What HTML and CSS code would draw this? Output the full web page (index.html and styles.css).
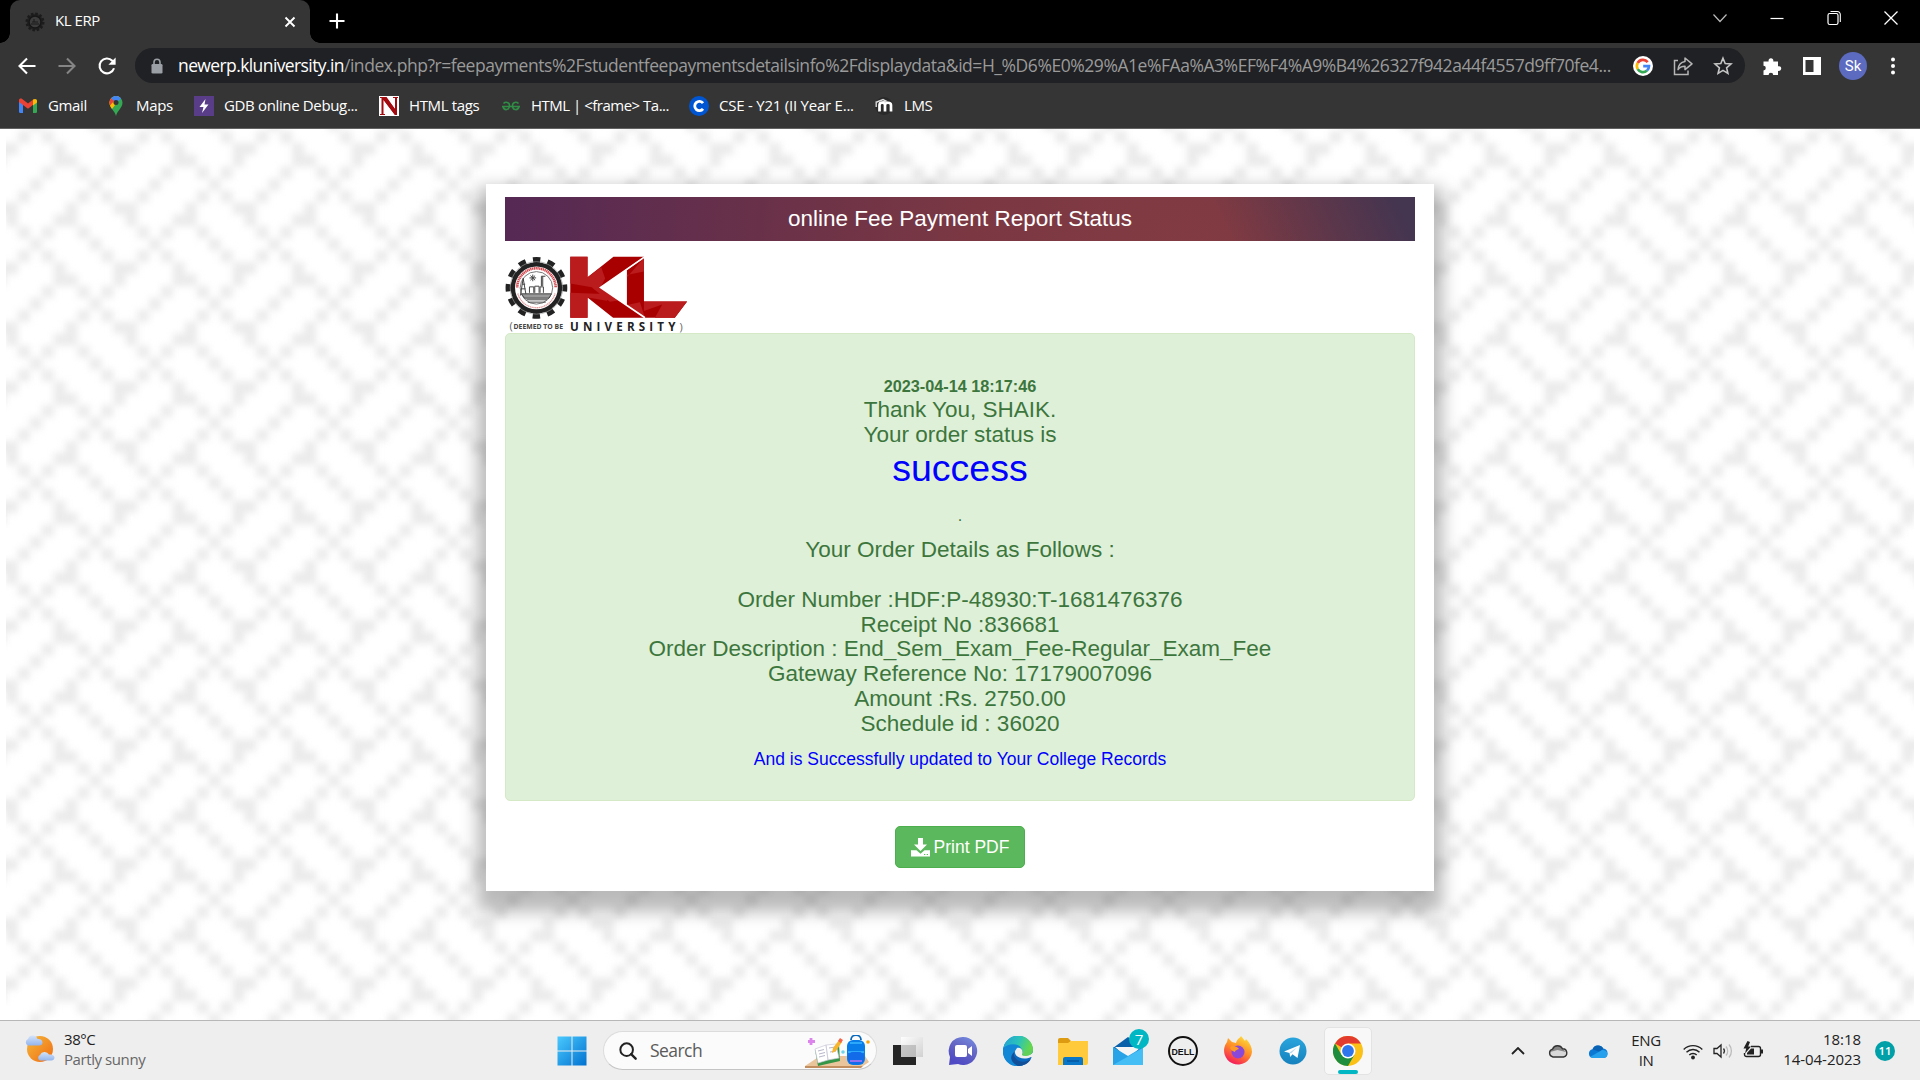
FILE: index.html
```html
<!DOCTYPE html>
<html lang="en">
<head>
<meta charset="utf-8">
<title>KL ERP</title>
<link rel="stylesheet" href="styles.css">
</head>
<body>
<header class="browser">
  <div class="tabstrip">
    <div class="tab">
      <svg class="favicon" viewBox="0 0 20 20"><circle cx="10" cy="10" r="8.2" fill="#242424" stroke="#1b1b1b" stroke-width="2.6" stroke-dasharray="2.4 1.9"/><circle cx="10" cy="10" r="6" fill="#3c3c3c" stroke="#161616" stroke-width="1.5"/><path d="M6 12h8M7 10h6M9 7v3" stroke="#1b1b1b"/></svg>
      <span class="tab-title">KL ERP</span>
      <svg class="tab-close" viewBox="0 0 12 12"><path d="M1.5 1.5l9 9M10.500 1.500l-9 9" stroke="#fff" stroke-width="1.9"/></svg>
    </div>
    <svg class="new-tab" viewBox="0 0 16 16"><path d="M8 .5v15M.5 8h15" stroke="#fff" stroke-width="2.1"/></svg>
    <div class="window-controls">
      <svg viewBox="0 0 16 16"><path d="M1.500 4.500L8 11.500l6.500-7" fill="none" stroke="#bbb" stroke-width="1.200"/></svg>
      <svg viewBox="0 0 16 16"><path d="M1.500 8.500h13" stroke="#fff" stroke-width="1.200"/></svg>
      <svg viewBox="0 0 16 16"><rect x="2" y="3.500" width="10" height="11" rx="1.800" fill="none" stroke="#fff" stroke-width="1.200"/><path d="M4.500 1.500h6.800a3 3 0 0 1 3 3v7.500" fill="none" stroke="#fff" stroke-width="1.100"/></svg>
      <svg viewBox="0 0 16 16"><path d="M1.500 1.500l13 13M14.500 1.500l-13 13" stroke="#fff" stroke-width="1.300"/></svg>
    </div>
  </div>
  <div class="toolbar">
    <div class="nav">
      <svg viewBox="0 0 20 20"><path d="M18.500 10H2.500M10 2.500L2.500 10l7.500 7.500" fill="none" stroke="#fff" stroke-width="2.100"/></svg>
      <svg viewBox="0 0 20 20"><path d="M1.500 10h16M10 2.500l7.500 7.500-7.500 7.500" fill="none" stroke="#858585" stroke-width="2.100"/></svg>
      <svg viewBox="0 0 20 20"><path d="M17 12.200A7.400 7.400 0 1 1 15.300 4.800L17.200 6.700" fill="none" stroke="#fff" stroke-width="2.100"/><path d="M18.600 1.500v7.200h-7.200z" fill="#fff"/></svg>
    </div>
    <div class="address">
      <svg class="lock" viewBox="0 0 12 16"><rect x="0.500" y="6" width="11" height="9.500" rx="1.300" fill="#9aa0a6"/><path d="M3 7V4.200a3 3 0 0 1 6 0V7" fill="none" stroke="#9aa0a6" stroke-width="1.600"/></svg>
      <div class="url"><span class="host">newerp.kluniversity.in</span>/index.php?r=feepayments%2Fstudentfeepaymentsdetailsinfo%2Fdisplaydata&amp;id=H_%D6%E0%29%A1e%FAa%A3%EF%F4%A9%B4%26327f942a44f4557d9ff70fe4...</div>
      <div class="address-icons">
        <svg viewBox="0 0 20 20"><circle cx="10" cy="10" r="10" fill="#fff"/><g fill="none" stroke-width="2.700"><path d="M14.700 6.100A6.100 6.100 0 0 0 4.700 7" stroke="#ea4335"/><path d="M4.700 7a6.100 6.100 0 0 0 0 6.100" stroke="#fbbc05"/><path d="M4.700 13.100a6.100 6.100 0 0 0 9.300 1.500" stroke="#34a853"/><path d="M14 14.600a6 6 0 0 0 2-4.500H10.200" stroke="#4285f4"/></g></svg>
        <svg viewBox="0 0 20 20"><path d="M5 4.500H1.500v14H15V14.500" fill="none" stroke="#b5b5b5" stroke-width="1.500"/><path d="M12 2l7 5.800-7 5.800v-3.400c-3.200 0-5.500 1-7 3.500.4-4.500 2.800-7.500 7-8.100z" fill="none" stroke="#b5b5b5" stroke-width="1.500" stroke-linejoin="round"/></svg>
        <svg viewBox="0 0 20 20"><path d="M10 2.200l2.200 5.300 5.800.5-4.400 3.800 1.300 5.600-4.900-3-4.900 3 1.300-5.600L2 8l5.800-.5z" fill="none" stroke="#c5c5c5" stroke-width="1.600"/></svg>
      </div>
    </div>
    <div class="toolbar-actions">
      <svg viewBox="0 0 20 20"><path d="M1.500 5.500h5.200a2.400 2.400 0 1 1 4.500 0H16v4.800a2.400 2.400 0 1 1 0 4.500V19h-4.800a2.300 2.300 0 1 0-4.600 0H1.500v-4.600a2.300 2.300 0 1 0 0-4.600z" fill="#fff"/></svg>
      <svg viewBox="0 0 20 20"><path d="M1 1h18v18H1z" fill="#fff"/><path d="M3.500 4h8v12h-8z" fill="#353535"/></svg>
      <span class="avatar">Sk</span>
      <svg viewBox="0 0 20 20"><g fill="#fff"><circle cx="10" cy="3.500" r="2"/><circle cx="10" cy="10" r="2"/><circle cx="10" cy="16.500" r="2"/></g></svg>
    </div>
  </div>
  <nav class="bookmarks">
    <span class="bookmark"><svg viewBox="0 0 20 20"><path d="M1 3.500L5 6.500V17H2.200A1.200 1.200 0 0 1 1 15.800z" fill="#4285f4"/><path d="M19 3.500L15 6.500V17h2.800a1.200 1.200 0 0 0 1.200-1.200z" fill="#34a853"/><path d="M1 4.500C1 2.500 3 2.200 4.200 3.100L10 7.500l5.800-4.400V8.300L10 12.700 1 6z" fill="#ea4335"/><path d="M15 3.700c2-1.500 4-.6 4 1.300V6.500l-4 3z" fill="#fbbc04"/></svg><span>Gmail</span></span>
    <span class="bookmark"><svg viewBox="0 0 20 20"><path d="M10 20C9 15 3.500 12 3.500 6.500A6.500 6.500 0 0 1 16.500 6.500C16.500 12 11 15 10 20z" fill="#34a853"/><path d="M3.500 6.500A6.500 6.500 0 0 1 14.500 2L6 13C4.500 11 3.500 9 3.500 6.500z" fill="#fbbc04"/><path d="M5 2.300A6.500 6.500 0 0 1 15 2.300L10 8z" fill="#4285f4"/><path d="M5 2.300L8 5 4 9.500C3 7 3.300 4.500 5 2.300z" fill="#ea4335"/><circle cx="10" cy="6.500" r="2.500" fill="#353535"/></svg><span>Maps</span></span>
    <span class="bookmark"><svg viewBox="0 0 20 20"><path d="M0 0h20v20H0z" fill="#593d88"/><path d="M11.500 3L5.500 11h4L8 17l6.500-8.500h-4z" fill="#fff"/></svg><span>GDB online Debug...</span></span>
    <span class="bookmark"><svg viewBox="0 0 20 20"><path d="M0 0h20v20H0z" fill="#fff"/><path d="M1 1h6l9 12V2h-2V1h5v1h-1v17h-2L4.500 4v14H6v1H1v-1h1.500V2H1z" fill="#a30b10"/><path d="M4 1h3.500L18 16v3h-2L4 3z" fill="#a30b10"/></svg><span>HTML tags</span></span>
    <span class="bookmark"><svg viewBox="0 0 20 20"><path d="M1 10.500h18M2.500 7.500c2-2 6-1.500 6 2 0 5-5.500 5.500-6.500 1M17.500 7.500c-2-2-6-1.500-6 2 0 5 5.500 5.500 6.500 1" fill="none" stroke="#2f8d46" stroke-width="1.600"/></svg><span>HTML | &lt;frame&gt; Ta...</span></span>
    <span class="bookmark"><svg viewBox="0 0 20 20"><circle cx="10" cy="10" r="10" fill="#0056d2"/><path d="M14 7.200A4.600 4.600 0 1 0 14 12.800" fill="none" stroke="#fff" stroke-width="2.800"/></svg><span>CSE - Y21 (II Year E...</span></span>
    <span class="bookmark"><svg viewBox="0 0 20 20"><circle cx="10" cy="10" r="9" fill="#292929"/><path d="M1.500 6.500L9 3.500l3 1.500-7 2M2.200 7v4" fill="none" stroke="#ddd" stroke-width="1.400"/><path d="M5.500 15.500V9c0-3 5.500-3 5.500 0v6.500M11 9c0-3 6-3 6 0v6.500" fill="none" stroke="#fff" stroke-width="2.700"/></svg><span>LMS</span></span>
  </nav>
</header>

<main class="page">
  <svg class="weave" aria-hidden="true">
    <defs>
      <pattern id="weave" width="10" height="10" patternUnits="userSpaceOnUse" patternTransform="translate(0 2) scale(11.925)">
        <path fill="#ebebeb" d="M1 0h1v1h-1zM3 0h1v1h-1zM8 0h1v1h-1zM0 1h1v1h-1zM4 1h1v1h-1zM9 1h1v1h-1zM4 2h2v1h-2zM9 2h1v1h-1zM3 3h1v1h-1zM6 3h1v1h-1zM8 3h1v1h-1zM2 4h1v1h-1zM7 4h1v1h-1zM1 5h1v1h-1zM6 5h1v1h-1zM8 5h1v1h-1zM0 6h1v1h-1zM5 6h1v1h-1zM9 6h1v1h-1zM0 7h1v1h-1zM4 7h2v1h-2zM1 8h1v1h-1zM3 8h1v1h-1zM6 8h1v1h-1zM2 9h1v1h-1zM7 9h1v1h-1z"/>
      </pattern>
      <filter id="soften" x="0" y="0" width="1" height="1" color-interpolation-filters="sRGB"><feGaussianBlur stdDeviation="3.900"/></filter>
    </defs>
    <rect x="-60" y="-60" width="2040" height="1020" fill="url(#weave)" filter="url(#soften)"/>
  </svg>
  <section class="report">
    <h1 class="report-title">online Fee Payment Report Status</h1>
    <svg class="logo" viewBox="135 257 550 232">
      <circle cx="229" cy="353" r="84" fill="none" stroke="#222" stroke-width="18" stroke-dasharray="22 21.980" stroke-dashoffset="11"/>
      <circle cx="229" cy="353" r="71" fill="#fff" stroke="#222" stroke-width="13"/>
      <circle cx="229" cy="353" r="79" fill="none" stroke="#999" stroke-width="2"/>
      <path d="M171 352a58 58 0 0 1 116 0" fill="none" stroke="#d44a50" stroke-width="8" stroke-dasharray="4 1.500"/>
      <path d="M173 370a58 58 0 0 0 112 0" fill="none" stroke="#e29a9d" stroke-width="4" stroke-dasharray="4 1.500"/>
      <circle cx="229" cy="353" r="49" fill="#fff" stroke="#777" stroke-width="3"/>
      <path d="M181 376l8-52 9 52M184 356h12M186 342h9M208 368v-18h13v18M224 368v-20h13v20M240 368v-18h10v18M244 348v-30h12M248 318v30M208 323h20M218 313v20M211 316l14 14M225 316l-14 14" fill="none" stroke="#444" stroke-width="3"/>
      <path d="M184 371h90l-7 13h-74zM199 389h62M203 396h54" fill="#999" stroke="#444" stroke-width="3"/>
      <path d="M331 259h52v62l78-62h92L422 352l134 91h-96l-77-61v61h-52z" fill="#a80000"/>
      <path d="M331 259h52v62l41-31 12 35-14 27-22 0-69-12zM331 368l122 4-12 20-58-10v61h-52zM422 352l58 38-30 5-54-43z" fill="#ba1b1d"/>
      <path d="M501 300l52-38v132h130l-37 49h-90l-55-38z" fill="#a80000"/>
      <path d="M501 322l52-60v42l-52 10zM553 394h130l-37 49h-60l22-40-55 20zM501 405l40-9 15 47z" fill="#ba1b1d"/>
      <path d="M553 261L422 352l134 91" fill="none" stroke="#fff" stroke-width="5"/>
      <path d="M501 300L424 352l77 52z" fill="#fff"/>
      <text x="148" y="481" class="logo-paren">(</text>
      <text x="160" y="476" class="logo-small" textLength="149" lengthAdjust="spacingAndGlyphs">DEEMED TO BE</text>
      <text x="330" y="482" class="logo-large" textLength="318">UNIVERSITY</text>
      <text x="660" y="482" class="logo-paren">)</text>
    </svg>
    <div class="receipt">
      <strong class="stamp">2023-04-14 18:17:46</strong>
      <p class="line">Thank You, SHAIK.</p>
      <p class="line">Your order status is</p>
      <p class="status">success</p>
      <p class="dot">.</p>
      <p class="line intro">Your Order Details as Follows :</p>
      <p class="line">Order Number :HDF:P-48930:T-1681476376</p>
      <p class="line">Receipt No :836681</p>
      <p class="line">Order Description : End_Sem_Exam_Fee-Regular_Exam_Fee</p>
      <p class="line">Gateway Reference No: 17179007096</p>
      <p class="line">Amount :Rs. 2750.00</p>
      <p class="line">Schedule id : 36020</p>
      <p class="note">And is Successfully updated to Your College Records</p>
    </div>
    <button class="print"><svg viewBox="0 0 19 19"><path d="M7 0h5v6.500h4L9.500 13 3 6.500h4z" fill="#fff"/><path d="M0 12.200h5.500l4 3.500 4-3.500H19v6.300H0z" fill="#fff"/><path d="M13 16.500h1.300M15.700 16.500H17" stroke="#5cb85c"/></svg>Print PDF</button>
  </section>
</main>

<footer class="taskbar">
  <div class="weather">
    <svg viewBox="0 0 30 30"><defs><linearGradient id="sun" x2="1" y2="1"><stop stop-color="#f4b93a"/><stop offset="1" stop-color="#f06b14"/></linearGradient><linearGradient id="mist" x2="0" y2="1"><stop stop-color="#d3e4fb"/><stop offset="1" stop-color="#93b4ee"/></linearGradient></defs><circle cx="15" cy="15" r="13" fill="url(#sun)"/><path d="M3 11.500a3.500 3.500 0 0 1 0-6.500 5 5 0 0 1 9.500 0c3-.5 5 1.500 5 3.500s-1.500 3-3 3z" fill="url(#mist)"/><path d="M15 26.500a3 3 0 0 1 0-5.500 5 5 0 0 1 9-.5c3.500-.5 5.500 1 5.500 3s-1.500 3-3 3z" fill="url(#mist)"/></svg>
    <div class="weather-text"><span>38°C</span><span class="muted">Partly sunny</span></div>
  </div>
  <div class="apps">
    <svg class="app start" viewBox="0 0 30 30"><defs><linearGradient id="win" gradientUnits="userSpaceOnUse" x2="30" y2="30"><stop stop-color="#4ccbff"/><stop offset="1" stop-color="#0070cf"/></linearGradient></defs><path d="M.5.500h14v14H.5zM15.500.500h14v14h-14zM.5 15.500h14v14H.5zM15.500 15.500h14v14h-14z" fill="url(#win)"/></svg>
    <div class="search">
      <svg class="glass" viewBox="0 0 20 20"><circle cx="8.500" cy="8.500" r="7" fill="none" stroke="#222" stroke-width="2.200"/><path d="M13.500 13.500l5 5" stroke="#222" stroke-width="2.600" stroke-linecap="round"/></svg>
      <span>Search</span>
      <svg class="school" viewBox="0 0 66 34"><path d="M0 31L15 21h45l4 6-6 4z" fill="#eac49b"/><path d="M0 31h58l-2 2H0z" fill="#c28e60"/><path d="M10 15l24-6 1 17-22 5z" fill="#349547"/><path d="M10 14l11-4 2 15-10 3zM21 10l10-1 3 14-11 2z" fill="#fff" stroke="#c8c8d8" stroke-width=".7"/><path d="M13 16l6-1.500M14 19l6-1.500M14 22l6-1.500M24 13l6-1M25 17l6-1" stroke="#a3a3bb" stroke-width=".8"/><path d="M27 18l1-5 6-8 3 2-6 9z" fill="#f7b52d"/><path d="M33 6l2-3 3 2-2 3z" fill="#f4664a"/><path d="M46 5a5 5 0 0 1 10 0" fill="none" stroke="#0868bb" stroke-width="1.800"/><rect x="42" y="5" width="18" height="25" rx="6" fill="#087ce9"/><path d="M43 17h16M45 8h12" stroke="#39b6ff" stroke-width="1.500"/><rect x="43" y="17" width="16" height="12" rx="5" fill="#126be9"/><path d="M45 26h12" stroke="#b975f3" stroke-width="1.500"/><path d="M6 3v7M3 6.500h7" stroke="#dc83ec" stroke-width="2.800"/><circle cx="38" cy="17" r="1.800" fill="#6bd6e9"/><circle cx="63" cy="7" r="1.800" fill="#f5a512"/></svg>
    </div>
    <svg class="app" viewBox="0 0 30 30"><defs><linearGradient id="pane" x2="1" y2="1"><stop stop-color="#fff"/><stop offset="1" stop-color="#cfcfcf"/></linearGradient></defs><path d="M0 9h23v20H0z" fill="#252525"/><path d="M8 1h22v20H8z" fill="url(#pane)" opacity=".93"/><path d="M8 9h15v12H8z" fill="#aaa" opacity=".5"/></svg>
    <svg class="app" viewBox="0 0 30 30"><defs><linearGradient id="chat" x1="1" y1="0" x2=".5" y2="1"><stop stop-color="#7791e6"/><stop offset=".5" stop-color="#6567c4"/><stop offset="1" stop-color="#504bc4"/></linearGradient></defs><path d="M15 1a14 14 0 1 1-5 27L1 29l1-8A14 14 0 0 1 15 1z" fill="url(#chat)"/><rect x="7" y="9" width="12" height="12" rx="2" fill="#fff"/><path d="M20 13l4-3v10l-4-3z" fill="#fff"/></svg>
    <svg class="app" viewBox="0 0 30 30"><defs><linearGradient id="edge" x2="1" y2=".3"><stop stop-color="#219fd9"/><stop offset=".55" stop-color="#2bc3ba"/><stop offset="1" stop-color="#66d84a"/></linearGradient></defs><circle cx="15" cy="15" r="15" fill="#0b68bf"/><path d="M.3 12A15 15 0 0 1 30 13c0 7-7 8-11 6 2-3 0-7-5-8C8 9 3 11 .3 12z" fill="url(#edge)"/><path d="M.3 12c5-5 17-6 19 3-3-4-9-2-8 4 0 5 5 9 9 10.500C8 33-2 24 .3 12z" fill="#1187d6"/><path d="M11 16c-1 8 8 13 17 7-3 5-8 7-13 7-7-3-9-9-4-14z" fill="#114f99"/><path d="M12 15c-1 6 8 10 16 6l2 1 0-6c-2 4-8 4-11 3 2-4-1-8-5-7z" fill="#eee"/><path d="M30 13c0 7-7 8-11 6l2-4z" fill="#60d05a"/></svg>
    <svg class="app" viewBox="0 0 30 30"><path d="M0 4a2 2 0 0 1 2-2h8l3 3-3 4H0z" fill="#dc9b10"/><path d="M0 7h10l3-2h17v22a2 2 0 0 1-2 2H0z" fill="#ffcb3c"/><path d="M5 23a2 2 0 0 1 2-2h16a2 2 0 0 1 2 2v6H5z" fill="#0a76c7"/><path d="M9 25h12" stroke="#04539a" stroke-width="1.300"/></svg>
    <div class="app mail"><svg viewBox="0 0 30 30"><path d="M0 12L15 1l15 11v17H0z" fill="#0b60aa"/><path d="M2 11h26l-13 12z" fill="#f5f5f5"/><path d="M0 11l15 9 15-9v18H0z" fill="#29a3e7"/><path d="M0 29L30 12v17z" fill="#45bdf5"/></svg><span class="badge">7</span></div>
    <svg class="app" viewBox="0 0 30 30"><circle cx="15" cy="15" r="14" fill="none" stroke="#111" stroke-width="2"/><text x="3.500" y="18.500" class="dell" textLength="23" lengthAdjust="spacingAndGlyphs">DELL</text></svg>
    <svg class="app" viewBox="0 0 30 30"><defs><linearGradient id="fox" x1=".8" y1="0" x2=".3" y2="1"><stop stop-color="#ffe33b"/><stop offset=".5" stop-color="#ff8a26"/><stop offset="1" stop-color="#f5155f"/></linearGradient></defs><path d="M4 6l1-4 4 4 4 1c1-4 4-5 5-7 2 2 3 4 4 5l1-2c4 4 6 8 6 13A14 14 0 1 1 4 6z" fill="url(#fox)"/><circle cx="15" cy="16" r="6.500" fill="#8a48d8"/><path d="M8 10c4 0 7 1 8 3-2 1-4 1-4 3-3-1-6-3-4-6z" fill="#ff9b25"/></svg>
    <svg class="app" viewBox="0 0 30 30"><defs><linearGradient id="tg" x2="0" y2="1"><stop stop-color="#2aa5dd"/><stop offset="1" stop-color="#1681bd"/></linearGradient></defs><circle cx="15" cy="15" r="13.500" fill="url(#tg)"/><path d="M6 15.500L22 9l-2.500 13-5-3.700-2.300 2.700-.7-4z" fill="#fff"/><path d="M11.500 16.500L19 11.500l-6 6z" fill="#b8d9ed"/></svg>
    <div class="active"><svg class="app" viewBox="0 0 30 30"><circle cx="15" cy="15" r="15" fill="#fbc116"/><path d="M15 15L2 7.500A15 15 0 0 1 28 7.500H15z" fill="#e33b2e"/><path d="M2 7.500A15 15 0 0 0 15 30l6.500-11.300L8.500 18.700z" fill="#1e8e3e"/><circle cx="15" cy="15" r="7.500" fill="#fff"/><circle cx="15" cy="15" r="5.900" fill="#2f75eb"/></svg></div>
  </div>
  <div class="tray">
    <svg class="caret" viewBox="0 0 14 8"><path d="M1 7l6-6 6 6" fill="none" stroke="#222" stroke-width="1.800"/></svg>
    <svg class="cloud" viewBox="0 0 20 14"><path d="M5 13a4 4 0 0 1-.5-7.800 5.500 5.500 0 0 1 10-.5A4.200 4.200 0 0 1 15.500 13z" fill="#d8d8d8"/><path d="M4.500 5.200a5.500 5.500 0 0 1 10-.5L18 8 9.500 6 2 8z" fill="#858585"/><path d="M5 13a4 4 0 0 1-.5-7.800 5.500 5.500 0 0 1 10-.5A4.200 4.200 0 0 1 15.500 13z" fill="none" stroke="#333" stroke-width="1.400"/></svg>
    <svg class="cloud" viewBox="0 0 20 14"><path d="M4.500 14a4.500 4.500 0 0 1 0-8.800 6 6 0 0 1 10.800-.7A4.800 4.800 0 0 1 15.500 14z" fill="#0a78d4"/><path d="M4.500 5.200a6 6 0 0 1 10.800-.7L12 8z" fill="#0962b3"/><path d="M2 13l12-7c3 0 5.500 1.500 5.500 4S18 14 15.500 14H4.500z" fill="#24a0ec"/></svg>
    <div class="lang"><span>ENG</span><span>IN</span></div>
    <svg class="glyph" viewBox="0 0 20 20"><g fill="none" stroke="#222" stroke-width="1.400"><path d="M.7 8.500a13 13 0 0 1 18.600 0M3.500 11.300a9 9 0 0 1 13 0M6.300 14a5.300 5.300 0 0 1 7.400 0"/></g><circle cx="10" cy="16.500" r="1.900" fill="#222"/></svg>
    <svg class="glyph" viewBox="0 0 20 20"><path d="M1 7.500h3l4-3.500v12l-4-3.500H1z" fill="none" stroke="#222" stroke-width="1.300"/><path d="M10.500 7.500a4 4 0 0 1 0 5" fill="none" stroke="#333" stroke-width="1.300"/><path d="M13 5.500a7 7 0 0 1 0 9M16 3.500a10 10 0 0 1 0 13" fill="none" stroke="#bbb" stroke-width="1.300"/></svg>
    <svg class="glyph" viewBox="0 0 20 20"><path d="M8 5.500h7.500a2 2 0 0 1 2 2v6a2 2 0 0 1-2 2H3.500a2 2 0 0 1-2-2V12" fill="none" stroke="#222" stroke-width="1.400"/><path d="M18 8.500h2v4h-2z" fill="#222"/><path d="M4 13.500V12l4-4.500h3v6z" fill="#222"/><path d="M4.500 0L.5 7.500h2.700L2 12.500l6-7H5.200L7 1z" fill="#222"/></svg>
    <div class="clock"><span>18:18</span><span>14-04-2023</span></div>
    <span class="count">11</span>
  </div>
</footer>
</body>
</html>
```
FILE: styles.css
```css
* { box-sizing: border-box; }
body {
  margin: 0;
  width: 1920px;
  height: 1080px;
  overflow: hidden;
  display: flex;
  flex-direction: column;
  font-family: "Open Sans", "Noto Sans", sans-serif;
  background: #fff;
}
svg { display: block; flex: none; }
p, h1 { margin: 0; font-weight: 400; }

/* Browser frame */
.browser { height: 129px; background: #353535; border-bottom: 1px solid #626262; flex: none; color: #fff; }
.tabstrip { height: 43px; background: #000; display: flex; align-items: flex-start; }
.tab {
  width: 300px; height: 43px; margin-left: 10px; padding: 0 14px 0 15px;
  display: flex; align-items: center; position: relative;
  background: #353535; border-radius: 10px 10px 0 0; font-size: 15px;
}
.tab::before, .tab::after {
  content: ""; position: absolute; bottom: 0; width: 10px; height: 10px;
}
.tab::before { left: -10px; background: radial-gradient(circle at 0 0, #000 9.500px, #353535 10px); }
.tab::after { right: -10px; background: radial-gradient(circle at 100% 0, #000 9.500px, #353535 10px); }
.favicon { width: 20px; height: 20px; }
.tab-title { margin-left: 10px; margin-right: auto; letter-spacing: -0.450px; padding-bottom: 3px; }
.tab-close { width: 12px; height: 12px; }
.new-tab { width: 16px; height: 16px; margin: 13px 0 0 19px; }
.window-controls { margin-left: auto; margin-right: 21px; padding-top: 10px; display: flex; gap: 41px; }
.window-controls svg { width: 16px; height: 16px; }

.toolbar { display: flex; align-items: center; height: 45px; }
.nav { display: flex; gap: 20px; margin-left: 17px; }
.nav svg, .address-icons svg { width: 20px; height: 20px; }
.address {
  width: 1610px; height: 35px; margin-left: 18px; padding-left: 16px; border-radius: 18px;
  background: #202124; display: flex; align-items: center;
}
.lock { width: 12px; height: 16px; }
.url { margin-left: 15px; width: 1439px; padding-bottom: 2px; white-space: nowrap; font-size: 17.500px; color: #9a9a9a; letter-spacing: -0.450px; }
.host { color: #fff; letter-spacing: -0.600px; }
.address-icons { display: flex; gap: 20px; margin-left: 16px; }
.toolbar-actions { display: flex; align-items: center; margin-left: 17px; gap: 20px; }
.toolbar-actions svg { width: 20px; height: 20px; }
.avatar {
  width: 28px; height: 28px; margin: 0 -4px 0 -3px; border-radius: 50%;
  background: #5c6bc0; text-align: center; line-height: 28px; font: 15px/28px Roboto, sans-serif;
}
.bookmarks {
  display: grid; grid-template-columns: 88px 88px 185px 122px 188px 185px auto;
  padding: 8px 0 0 18px; font-size: 15px; letter-spacing: -0.350px;
}
.bookmark { display: flex; align-items: center; gap: 10px; height: 20px; line-height: 20px; white-space: nowrap; }
.bookmark svg { width: 20px; height: 20px; }
.bookmark span { padding-bottom: 2px; }
.bookmark:nth-child(5) { letter-spacing: -0.500px; }
.bookmark:nth-child(6) { letter-spacing: -0.230px; }

/* Page */
.page { position: relative; height: 891px; flex: none; overflow: hidden; padding-top: 55px; }
.weave { position: absolute; left: 6px; top: 0; width: 1908px; height: 891px; }
.report {
  position: relative; width: 948px; height: 707px; margin: 0 auto; padding: 13px 19px 0;
  background: #fff; box-shadow: 0 12px 16px 9px rgba(0, 0, 0, 0.270);
  font-family: "Liberation Sans", Arial, sans-serif;
  display: flex; flex-direction: column;
}
.report-title {
  height: 44px; line-height: 43px; text-align: center; font-size: 22.500px; color: #fff;
  background:
    linear-gradient(65deg, rgba(68, 53, 80, 0) 78%, #443550 98%),
    radial-gradient(circle at 75% 150%, #823b42 0, #7b3843 220px, #693149 430px, #552954 680px);
}
.logo { width: 183px; height: 77px; margin: 15px 0 0; }
.logo-paren { font: 33px "Open Sans", sans-serif; fill: #666; }
.logo-small { font: 700 20px "Open Sans", sans-serif; fill: #444; }
.logo-large { font: 700 35px "Open Sans", sans-serif; fill: #222; }
.receipt {
  height: 468px; padding-top: 41px; text-align: center; color: #3c763d;
  background: #dff0d8; border: 1px solid #d6e9c6; border-radius: 5px;
}
.stamp { display: block; font-size: 16.250px; line-height: 23.250px; }
.line { font-size: 22.500px; line-height: 24.750px; }
.status { font-size: 37.500px; line-height: 41.250px; color: #00f; }
.dot { margin: 14.500px 0 11.500px; font-size: 16.250px; line-height: 23.250px; }
.intro { margin-bottom: 24.750px; }
.note { margin-top: 14px; font-size: 17.500px; line-height: 19.250px; color: #00f; }
.print {
  align-self: center; width: 130px; height: 42px; margin-top: 25px; padding: 0; border: 1px solid #4cae4c; border-radius: 5px;
  background: #5cb85c; color: #fff; font: 17.500px "Liberation Sans", Arial, sans-serif;
  display: flex; align-items: center; justify-content: center; gap: 4px;
}
.print svg { width: 19px; height: 19px; }

/* Taskbar */
.taskbar {
  height: 60px; flex: none; border-top: 1px solid #b7b7b7; background: #eee; color: #222;
  display: flex; align-items: center; font-size: 15px; line-height: 20px;
}
.weather { display: flex; align-items: center; gap: 9px; width: 557px; padding-left: 25px; padding-bottom: 3px; flex: none; }
.weather svg { width: 30px; height: 30px; }
.weather-text { display: flex; flex-direction: column; letter-spacing: -0.420px; }
.muted { color: #666; }
.apps { display: flex; align-items: center; gap: 25px; }
.app { width: 30px; height: 30px; }
.search {
  width: 274px; height: 39px; margin: 0 -9px; padding-left: 15px; display: flex; align-items: center;
  background: #fbfbfb; border: 1px solid #dcdcdc; border-bottom-color: #c4c4c4; border-radius: 20px;
  color: #5a5a5a; font-size: 17.500px; letter-spacing: -0.550px;
}
.search span { padding-bottom: 1px; }
.glass { width: 18px; height: 18px; margin-right: 13px; }
.school { width: 66px; height: 34px; margin: 3px 5px 0 auto; }
.mail { position: relative; }
.badge {
  position: absolute; right: -6px; top: -7px; width: 20px; height: 20px; border-radius: 50%;
  background: #00b7c3; color: #fff; text-align: center; line-height: 20px; font-size: 15px;
}
.dell { font: bold 9px "Liberation Sans", sans-serif; fill: #111; }
.active {
  position: relative; width: 48px; height: 48px; margin-left: -9px; border-radius: 5px; border: 1px solid #e3e3e3;
  background: #f8f8f8; display: flex; align-items: center; justify-content: center;
}
.active::after { content: ""; position: absolute; left: 13px; bottom: 0; width: 20px; height: 4px; border-radius: 2px; background: #00b7c3; }
.tray { display: flex; align-items: center; margin-left: auto; margin-right: 25px; }
.caret { width: 14px; height: 8px; margin-right: 23px; }
.cloud { width: 20px; height: 14px; margin-right: 20px; }
.lang { width: 36px; text-align: center; display: flex; flex-direction: column; letter-spacing: -0.400px; margin-right: 19px; padding-bottom: 2px; }
.glyph { width: 20px; height: 20px; margin-right: 10px; }
.clock { width: 88px; padding-bottom: 3px; display: flex; flex-direction: column; text-align: right; letter-spacing: -0.050px; white-space: nowrap; align-items: flex-end; }
.count {
  width: 20px; height: 20px; margin-left: 14px; border-radius: 50%; background: #00a0a8; color: #fff;
  text-align: center; font-size: 11.500px; font-weight: 600; line-height: 20px;
}
```
